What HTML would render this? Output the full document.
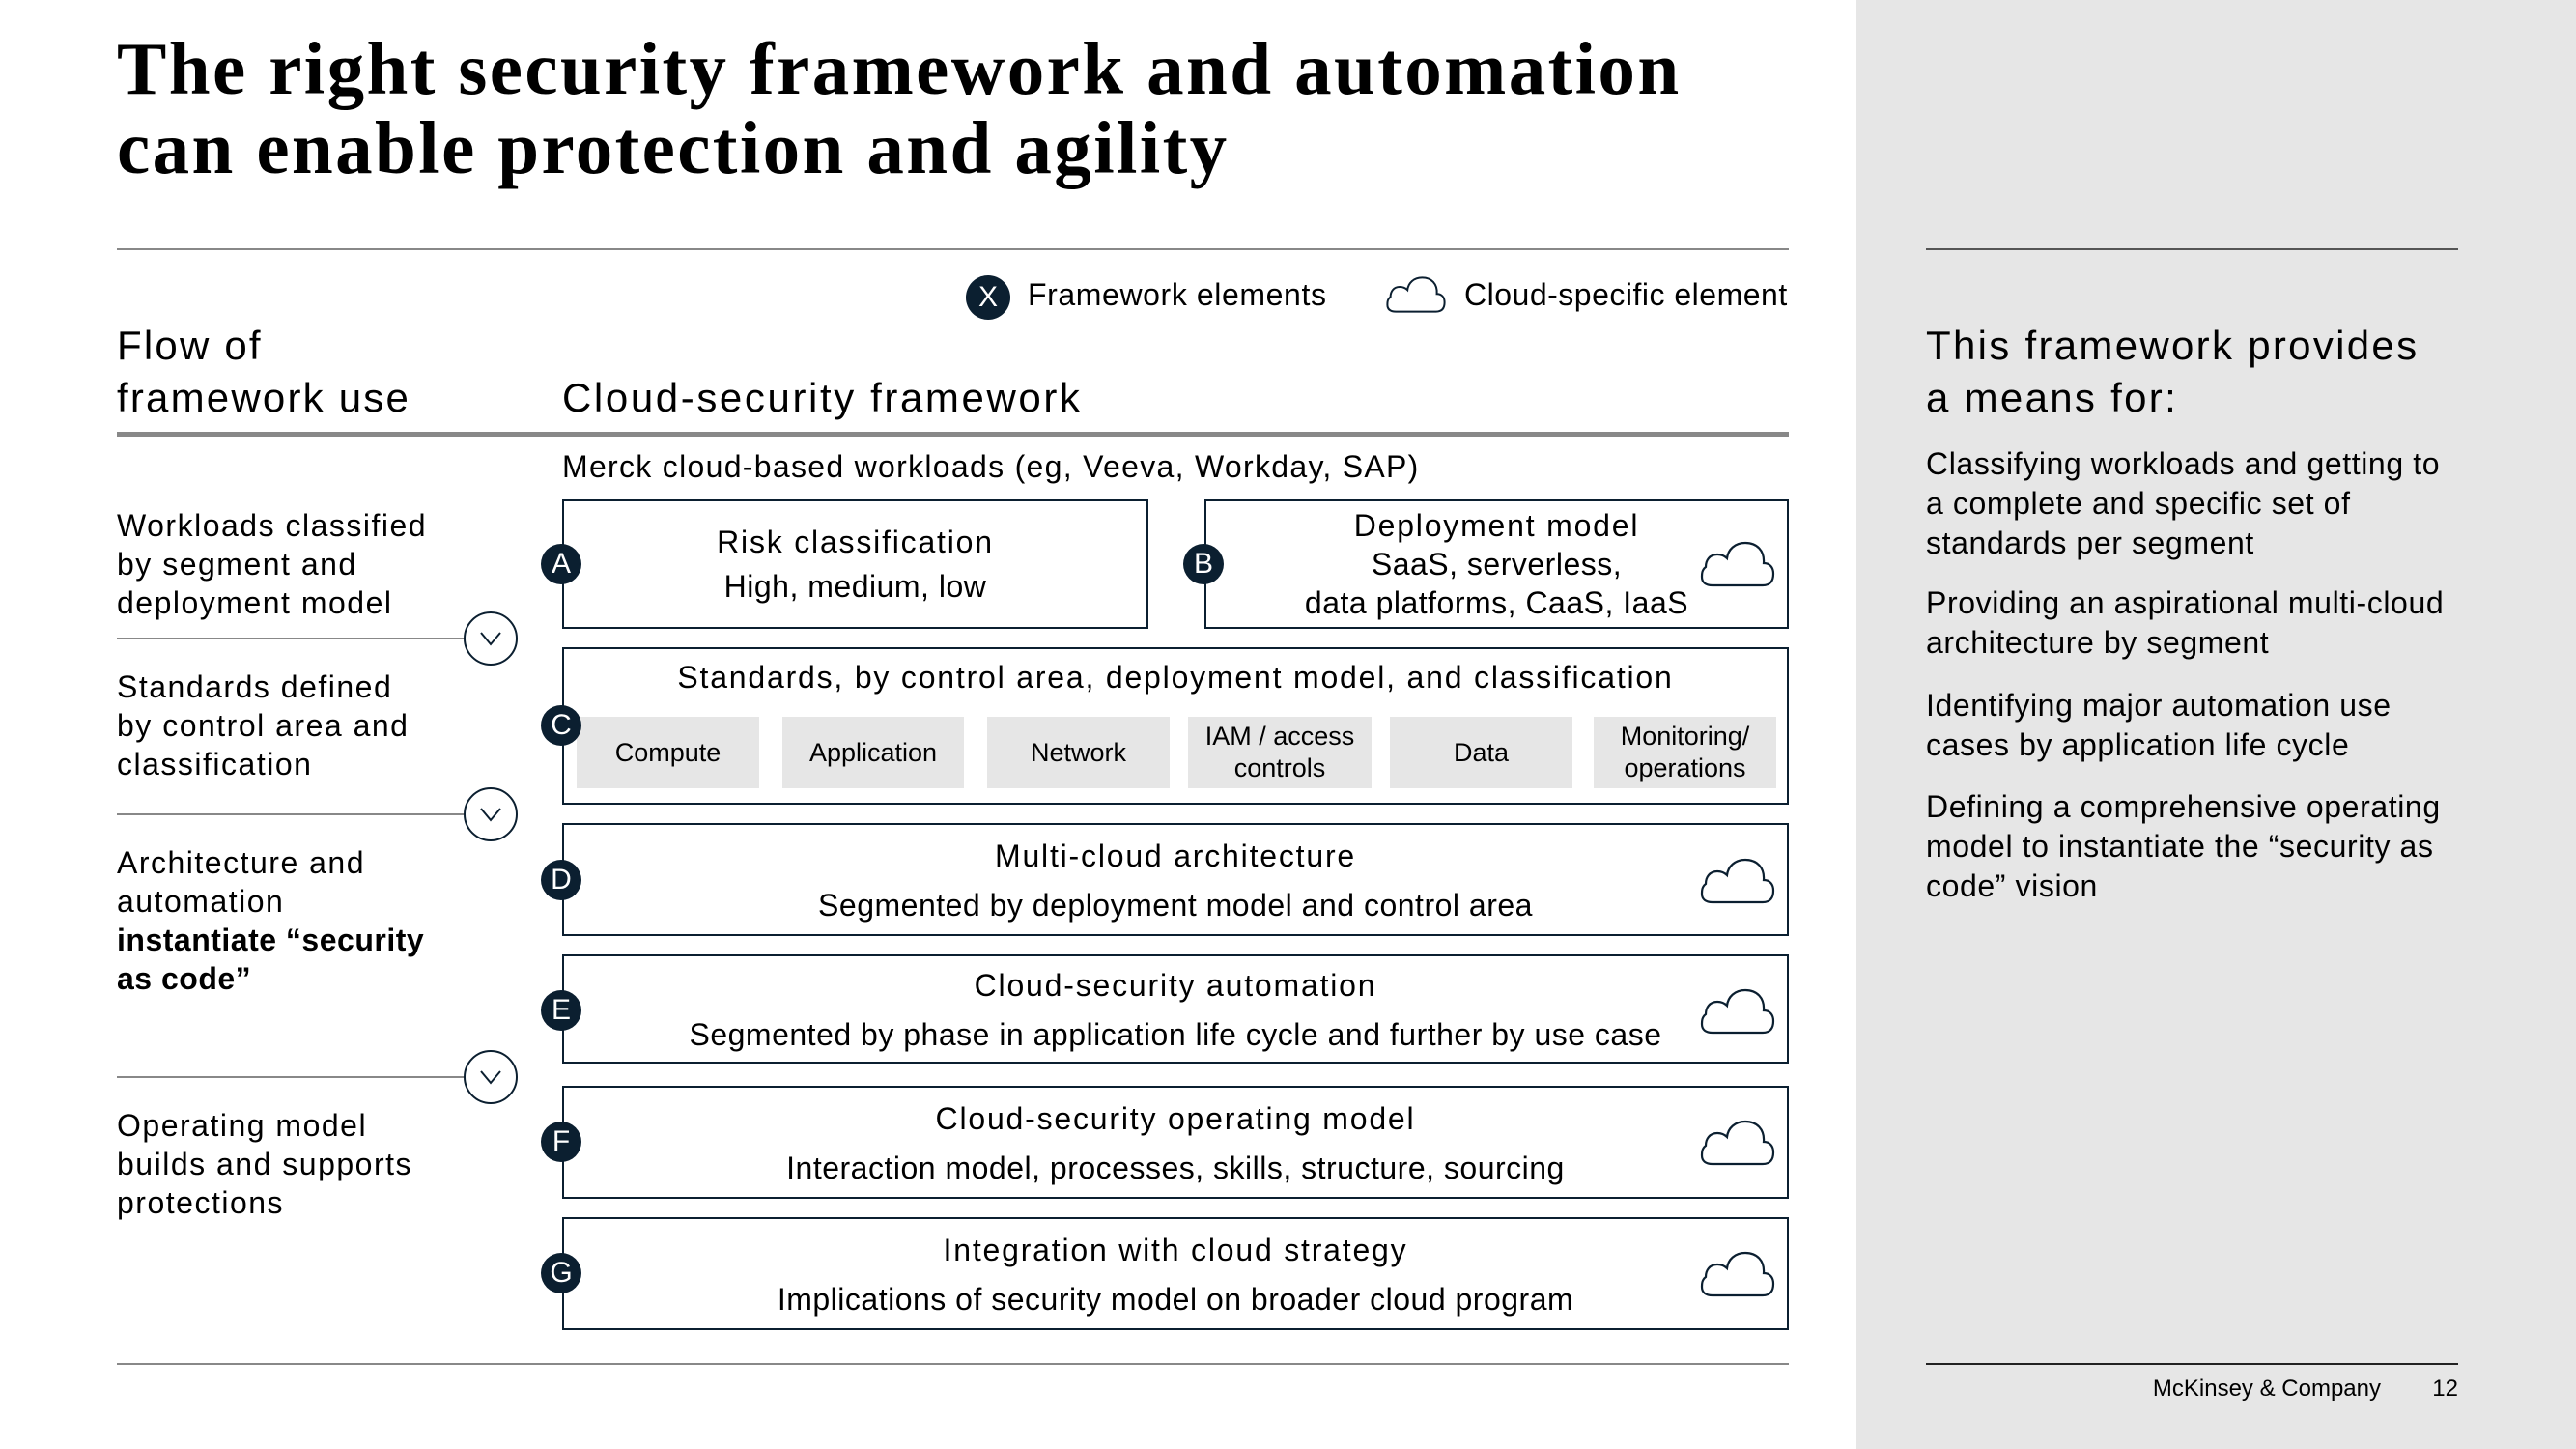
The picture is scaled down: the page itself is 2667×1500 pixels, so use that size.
<!DOCTYPE html>
<html><head><meta charset="utf-8"><style>
*{margin:0;padding:0;box-sizing:border-box}
body{width:2667px;height:1500px;position:relative;background:#fff;font-family:"Liberation Sans",Arial,sans-serif;color:#000;overflow:hidden}
.a{position:absolute;white-space:nowrap}
.t{font-size:32px;line-height:40px}
.c{text-align:center}
.tt{letter-spacing:1.8px}
.st{letter-spacing:0.5px}
.box{position:absolute;border:2.5px solid #0b1f30}
.tile{position:absolute;background:#e6e6e6;top:742px;height:74px;display:flex;align-items:center;justify-content:center;text-align:center;font-size:27px;line-height:33px}
.dot{position:absolute;width:42px;height:42px;border-radius:50%;background:#0b1f30;color:#fff;font-size:30px;line-height:42px;text-align:center}
.hr{position:absolute;height:2px;background:#888}
.chev{position:absolute;width:56px;height:56px;border:2px solid #0b1f30;border-radius:50%;background:#fff}
svg{position:absolute}
.lf{letter-spacing:1.5px}
</style></head><body>
<div class="a" style="left:1922px;top:0;width:745px;height:1500px;background:#e6e6e6"></div>

<div class="a" style="left:121px;top:30px;font-family:'Liberation Serif',Georgia,serif;font-weight:bold;font-size:77px;line-height:82px;letter-spacing:2.4px">The right security framework and automation<br>can enable protection and agility</div>

<div class="hr" style="left:121px;top:257px;width:1731px"></div>
<div class="hr" style="left:1994px;top:257px;width:551px;background:#555"></div>

<div class="dot" style="left:1000px;top:285px;width:46px;height:46px;line-height:46px">X</div>
<div class="a t" style="left:1064px;top:285px;letter-spacing:0.6px">Framework elements</div>
<svg style="left:1434px;top:283px" width="64" height="44" viewBox="0 0 80 52"><path d="M14 48 H66 C74 48 77 43 77 36 C77 29 73 25 67 25 C68 12 60 4 48 4 C37 4 30 11 29 20 C26 17 23 16 19 16 C11 16 7 22 7 29 C3 32 3 36 3 39 C3 45 7 48 14 48 Z" fill="none" stroke="#0b1f30" stroke-width="2.5"/></svg>
<div class="a t" style="left:1516px;top:285px;letter-spacing:0.5px">Cloud-specific element</div>

<div class="a" style="left:121px;top:331px;font-size:42px;line-height:54px;letter-spacing:2.2px">Flow of<br>framework use</div>
<div class="a" style="left:582px;top:385px;font-size:42px;line-height:54px;letter-spacing:2.6px">Cloud-security framework</div>
<div class="hr" style="left:121px;top:447px;width:1731px;height:5px"></div>

<div class="a" style="left:1994px;top:331px;font-size:42px;line-height:54px;letter-spacing:2.3px">This framework provides<br>a means for:</div>
<div class="a" style="left:1994px;top:460px;font-size:32px;line-height:41px;letter-spacing:0.6px">Classifying workloads and getting to<br>a complete and specific set of<br>standards per segment</div>
<div class="a" style="left:1994px;top:604px;font-size:32px;line-height:41px;letter-spacing:0.6px">Providing an aspirational multi-cloud<br>architecture by segment</div>
<div class="a" style="left:1994px;top:710px;font-size:32px;line-height:41px;letter-spacing:0.6px">Identifying major automation use<br>cases by application life cycle</div>
<div class="a" style="left:1994px;top:815px;font-size:32px;line-height:41px;letter-spacing:0.6px">Defining a comprehensive operating<br>model to instantiate the “security as<br>code” vision</div>

<div class="a t" style="left:582px;top:463px;letter-spacing:1.3px">Merck cloud-based workloads (eg, Veeva, Workday, SAP)</div>

<!-- left flow -->
<div class="a t lf" style="left:121px;top:524px">Workloads classified<br>by segment and<br>deployment model</div>
<div class="hr" style="left:121px;top:660px;width:386px"></div>
<div class="a t lf" style="left:121px;top:691px">Standards defined<br>by control area and<br>classification</div>
<div class="hr" style="left:121px;top:842px;width:386px"></div>
<div class="a t lf" style="left:121px;top:873px">Architecture and<br>automation<br><b style="letter-spacing:0.5px">instantiate “security<br>as code”</b></div>
<div class="hr" style="left:121px;top:1114px;width:386px"></div>
<div class="a t lf" style="left:121px;top:1145px">Operating model<br>builds and supports<br>protections</div>

<div class="chev" style="left:480px;top:633px"></div>
<div class="chev" style="left:480px;top:815px"></div>
<div class="chev" style="left:480px;top:1087px"></div>
<svg style="left:480px;top:633px" width="56" height="56"><path d="M18 22 L28 34 L38 22" fill="none" stroke="#0b1f30" stroke-width="2"/></svg>
<svg style="left:480px;top:815px" width="56" height="56"><path d="M18 22 L28 34 L38 22" fill="none" stroke="#0b1f30" stroke-width="2"/></svg>
<svg style="left:480px;top:1087px" width="56" height="56"><path d="M18 22 L28 34 L38 22" fill="none" stroke="#0b1f30" stroke-width="2"/></svg>

<!-- boxes -->
<div class="box" style="left:582px;top:517px;width:607px;height:134px"></div>
<div class="a t c tt" style="left:582px;top:541px;width:607px">Risk classification</div>
<div class="a t c st" style="left:582px;top:587px;width:607px">High, medium, low</div>

<div class="box" style="left:1247px;top:517px;width:605px;height:134px"></div>
<div class="a t c tt" style="left:1247px;top:524px;width:605px">Deployment model</div>
<div class="a t c st" style="left:1247px;top:564px;width:605px">SaaS, serverless,<br>data platforms, CaaS, IaaS</div>

<div class="box" style="left:582px;top:670px;width:1270px;height:163px"></div>
<div class="a t c tt" style="left:582px;top:681px;width:1270px">Standards, by control area, deployment model, and classification</div>
<div class="tile" style="left:597px;width:189px">Compute</div>
<div class="tile" style="left:810px;width:188px">Application</div>
<div class="tile" style="left:1022px;width:189px">Network</div>
<div class="tile" style="left:1230px;width:190px">IAM / access<br>controls</div>
<div class="tile" style="left:1439px;width:189px">Data</div>
<div class="tile" style="left:1650px;width:189px">Monitoring/<br>operations</div>

<div class="box" style="left:582px;top:852px;width:1270px;height:117px"></div>
<div class="a t c tt" style="left:582px;top:866px;width:1270px">Multi-cloud architecture</div>
<div class="a t c st" style="left:582px;top:917px;width:1270px">Segmented by deployment model and control area</div>

<div class="box" style="left:582px;top:988px;width:1270px;height:113px"></div>
<div class="a t c tt" style="left:582px;top:1000px;width:1270px">Cloud-security automation</div>
<div class="a t c st" style="left:582px;top:1051px;width:1270px">Segmented by phase in application life cycle and further by use case</div>

<div class="box" style="left:582px;top:1124px;width:1270px;height:117px"></div>
<div class="a t c tt" style="left:582px;top:1138px;width:1270px">Cloud-security operating model</div>
<div class="a t c st" style="left:582px;top:1189px;width:1270px">Interaction model, processes, skills, structure, sourcing</div>

<div class="box" style="left:582px;top:1260px;width:1270px;height:117px"></div>
<div class="a t c tt" style="left:582px;top:1274px;width:1270px">Integration with cloud strategy</div>
<div class="a t c st" style="left:582px;top:1325px;width:1270px">Implications of security model on broader cloud program</div>

<!-- clouds -->
<svg style="left:1759px;top:558px" width="80" height="52" viewBox="0 0 80 52"><path d="M14 48 H66 C74 48 77 43 77 36 C77 29 73 25 67 25 C68 12 60 4 48 4 C37 4 30 11 29 20 C26 17 23 16 19 16 C11 16 7 22 7 29 C3 32 3 36 3 39 C3 45 7 48 14 48 Z" fill="none" stroke="#0b1f30" stroke-width="2.2"/></svg>
<svg style="left:1759px;top:886px" width="80" height="52" viewBox="0 0 80 52"><path d="M14 48 H66 C74 48 77 43 77 36 C77 29 73 25 67 25 C68 12 60 4 48 4 C37 4 30 11 29 20 C26 17 23 16 19 16 C11 16 7 22 7 29 C3 32 3 36 3 39 C3 45 7 48 14 48 Z" fill="none" stroke="#0b1f30" stroke-width="2.2"/></svg>
<svg style="left:1759px;top:1021px" width="80" height="52" viewBox="0 0 80 52"><path d="M14 48 H66 C74 48 77 43 77 36 C77 29 73 25 67 25 C68 12 60 4 48 4 C37 4 30 11 29 20 C26 17 23 16 19 16 C11 16 7 22 7 29 C3 32 3 36 3 39 C3 45 7 48 14 48 Z" fill="none" stroke="#0b1f30" stroke-width="2.2"/></svg>
<svg style="left:1759px;top:1157px" width="80" height="52" viewBox="0 0 80 52"><path d="M14 48 H66 C74 48 77 43 77 36 C77 29 73 25 67 25 C68 12 60 4 48 4 C37 4 30 11 29 20 C26 17 23 16 19 16 C11 16 7 22 7 29 C3 32 3 36 3 39 C3 45 7 48 14 48 Z" fill="none" stroke="#0b1f30" stroke-width="2.2"/></svg>
<svg style="left:1759px;top:1293px" width="80" height="52" viewBox="0 0 80 52"><path d="M14 48 H66 C74 48 77 43 77 36 C77 29 73 25 67 25 C68 12 60 4 48 4 C37 4 30 11 29 20 C26 17 23 16 19 16 C11 16 7 22 7 29 C3 32 3 36 3 39 C3 45 7 48 14 48 Z" fill="none" stroke="#0b1f30" stroke-width="2.2"/></svg>

<!-- letters -->
<div class="dot" style="left:560px;top:563px">A</div>
<div class="dot" style="left:1225px;top:563px">B</div>
<div class="dot" style="left:560px;top:730px">C</div>
<div class="dot" style="left:560px;top:890px">D</div>
<div class="dot" style="left:560px;top:1025px">E</div>
<div class="dot" style="left:560px;top:1161px">F</div>
<div class="dot" style="left:560px;top:1297px">G</div>

<div class="hr" style="left:121px;top:1411px;width:1731px"></div>
<div class="hr" style="left:1994px;top:1411px;width:551px;background:#222"></div>
<div class="a" style="left:2100px;top:1424px;width:365px;text-align:right;font-size:24px;line-height:28px">McKinsey &amp; Company</div>
<div class="a" style="left:2500px;top:1424px;width:45px;text-align:right;font-size:24px;line-height:28px">12</div>
</body></html>
